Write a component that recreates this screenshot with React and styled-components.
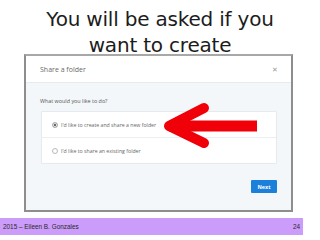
import React from "react";
import styled, { createGlobalStyle } from "styled-components";

const GlobalStyle = createGlobalStyle`
  html, body {
    margin: 0;
    padding: 0;
    background: #fff;
  }
  body {
    width: 320px;
    height: 240px;
    overflow: hidden;
    font-family: "Liberation Sans", Arial, sans-serif;
  }
`;

const Slide = styled.div`
  width: 320px;
  height: 240px;
  display: flex;
  flex-direction: column;
`;

const Title = styled.h1`
  margin: 0;
  height: 48px;
  padding-top: 6px;
  font-family: "DejaVu Sans", "Liberation Sans", sans-serif;
  font-weight: 400;
  font-size: 20px;
  line-height: 26px;
  letter-spacing: -0.2px;
  color: #1c1c1c;
  text-align: center;
`;

const Frame = styled.div`
  position: relative;
  margin-left: 24px;
  width: 265px;
  height: 154px;
  border: 2px solid #8e8e8e;
  border-top-color: #a8a8a8;
  background: #f4f7fa;
  display: flex;
  flex-direction: column;
`;

const DialogHeader = styled.div`
  height: 26px;
  flex-shrink: 0;
  background: #fff;
  border-bottom: 1px solid #e7ebef;
  display: flex;
  align-items: center;
  justify-content: space-between;
  padding: 0 14px;
  font-family: "Open Sans", "Liberation Sans", sans-serif;
  font-size: 7px;
  color: #6a6a6a;
`;

const Close = styled.span`
  font-size: 7px;
  color: #9a9a9a;
  margin-right: -1px;
`;

const DialogBody = styled.div`
  flex: 1;
  padding: 14px 14px 0 15px;
  display: flex;
  flex-direction: column;
  font-family: "Open Sans", "Liberation Sans", sans-serif;
`;

const Question = styled.div`
  font-size: 5.4px;
  line-height: 8px;
  color: #555;
  margin-bottom: 6px;
  margin-left: -1px;
`;

const Options = styled.div`
  background: #fff;
  border: 1px solid #e6eaee;
  border-radius: 1px;
`;

const Option = styled.div`
  height: 25px;
  display: flex;
  align-items: center;
  gap: 3px;
  padding-left: 10px;
  font-size: 5.2px;
  color: #666;
  & + & {
    border-top: 1px solid #eceff2;
  }
`;

const Radio = styled.span`
  width: 4px;
  height: 4px;
  border-radius: 50%;
  border: 0.6px solid #b8b8b8;
  background: ${(p) => (p.checked ? "#6a6a6a" : "#fff")};
  box-shadow: ${(p) => (p.checked ? "inset 0 0 0 0.8px #fff" : "none")};
`;

const Actions = styled.div`
  display: flex;
  justify-content: flex-end;
  margin-top: 16px;
`;

const NextButton = styled.div`
  width: 26px;
  height: 13px;
  background: #1b80d9;
  border-radius: 1px;
  color: #fff;
  font-size: 5.4px;
  font-weight: 700;
  display: flex;
  align-items: center;
  justify-content: center;
`;

const Arrow = styled.svg`
  position: absolute;
  left: 0;
  top: 0;
  width: 265px;
  height: 154px;
  pointer-events: none;
`;

const Footer = styled.div`
  margin-top: 6px;
  width: 303px;
  height: 17px;
  background: #cc9cfa;
  display: flex;
  align-items: center;
  justify-content: space-between;
  padding: 0 3px;
  box-sizing: border-box;
  font-size: 6.4px;
  color: #2a2a2a;
`;

export default function App() {
  return (
    <Slide>
      <GlobalStyle />
      <Title>
        You will be asked if you
        <br />
        want to create
      </Title>
      <Frame>
        <DialogHeader>
          <span>Share a folder</span>
          <Close>✕</Close>
        </DialogHeader>
        <DialogBody>
          <Question>What would you like to do?</Question>
          <Options>
            <Option>
              <Radio checked />
              I'd like to create and share a new folder
            </Option>
            <Option>
              <Radio />
              I'd like to share an existing folder
            </Option>
          </Options>
          <Actions>
            <NextButton>Next</NextButton>
          </Actions>
        </DialogBody>
        <Arrow viewBox="0 0 265 154">
          <path d="M143 70 L231 70" stroke="#f00008" strokeWidth="11" fill="none" />
          <path
            d="M178 52 L143 70 L178 87"
            stroke="#f00008"
            strokeWidth="10"
            strokeLinecap="round"
            strokeLinejoin="round"
            fill="none"
          />
        </Arrow>
      </Frame>
      <Footer>
        <span>2015 – Eileen B. Gonzales</span>
        <span>24</span>
      </Footer>
    </Slide>
  );
}
